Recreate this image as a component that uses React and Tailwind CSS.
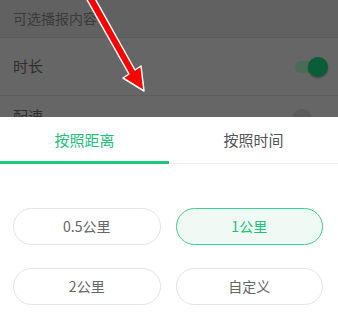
import React, { useState } from 'react';

const font = { fontFamily: '"Noto Sans CJK SC", "Noto Sans", sans-serif' };

const options = ['0.5公里', '1公里', '2公里', '自定义'];

function App() {
  const [tab, setTab] = useState(0);
  const [picked, setPicked] = useState('1公里');

  return (
    <div
      className="relative w-[338px] h-[313px] overflow-hidden bg-[#666666] flex flex-col"
      style={font}
    >
      {/* dimmed settings list behind the sheet */}
      <div className="h-[38px] bg-[#616161] border-b border-[#5c5c5c] flex items-center px-[13px] text-[14px] text-[#3b3b3b]">
        可选播报内容
      </div>
      <div className="h-[58px] border-b border-[#5e5e5e] flex items-center justify-between pl-[13px] pr-[13px] text-[15px] text-[#2f2f2f]">
        <span>时长</span>
        <div className="relative w-[30px] h-[20px] flex items-center">
          <div className="w-[27px] h-[12px] rounded-full bg-[#4b6a58]" />
          <div className="absolute right-[-3px] top-0 w-[20px] h-[20px] rounded-full bg-[#0b5d37] shadow-[0_1px_2px_rgba(0,0,0,0.35)]" />
        </div>
      </div>
      <div className="h-[21px] flex items-end justify-between pl-[13px] pr-[13px] text-[15px] text-[#2f2f2f] leading-none">
        <span className="translate-y-[6px]">配速</span>
        <div className="w-[20px] h-[20px] rounded-full bg-[#5c5c5c] translate-y-[12px] mr-[13px]" />
      </div>

      {/* bottom sheet */}
      <div className="relative z-10 flex-1 bg-white flex flex-col">
        <div className="flex h-[47px]">
          {['按照距离', '按照时间'].map((t, i) => (
            <button
              key={t}
              onClick={() => setTab(i)}
              className={
                'flex-1 flex items-start justify-center text-[15px] leading-[22px] pt-[12px] ' +
                (tab === i
                  ? 'text-[#22bf7b] border-b-[3px] border-[#1fc77d]'
                  : 'text-[#555555] border-b border-[#f0f0f0]')
              }
            >
              {t}
            </button>
          ))}
        </div>

        <div className="grid grid-cols-2 gap-x-[15px] gap-y-[23px] pl-[13px] pr-[15px] pt-[44px]">
          {options.map((o) => (
            <button
              key={o}
              onClick={() => setPicked(o)}
              className={
                'h-[37px] rounded-full border text-[14px] flex items-center justify-center ' +
                (picked === o
                  ? 'bg-[#effaf5] border-[#3fcf8f] text-[#22bf7b]'
                  : 'bg-white border-[#e4e4e4] text-[#666666]')
              }
            >
              {o}
            </button>
          ))}
        </div>
      </div>

      {/* red annotation arrow */}
      <svg
        className="absolute left-0 top-0 z-20 pointer-events-none"
        width="338"
        height="120"
        viewBox="0 0 338 120"
      >
        <g stroke="#ffffff" strokeWidth="1.5" strokeLinejoin="round">
          <polygon
            points="86,-2 93,-5 135,70 141,66 144,91 123,78 129,74"
            fill="#ff0000"
          />
        </g>
      </svg>
    </div>
  );
}

export default App;
